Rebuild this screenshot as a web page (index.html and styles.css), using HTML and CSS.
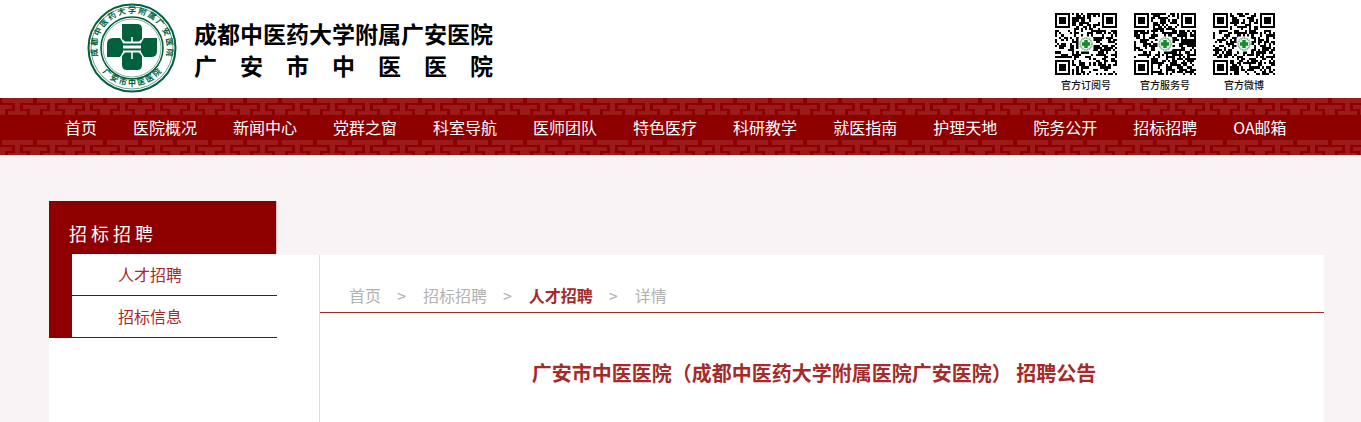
FILE: index.html
```html
<!DOCTYPE html>
<html lang="zh-CN">
<head>
    <meta charset="UTF-8">
    <meta name="viewport" content="width=device-width, initial-scale=1.0">
    <title>广安市中医医院 招聘公告</title>
    <link rel="stylesheet" href="styles.css">
</head>
<body>
    <!-- 页头 -->
    <header class="header">
        <a href="#" class="brand">
            <svg class="seal" viewBox="0 0 90 90" aria-hidden="true">
                <defs>
                    <path id="arcTop" d="M12.500 58 A35 35 0 1 1 77.500 58"/>
                    <path id="arcBottom" d="M12 64 A38.500 38.500 0 0 0 78 64"/>
                </defs>
                <circle cx="45" cy="45" r="43.5" fill="#fff" stroke="#00613c" stroke-width="2"/>
                <circle cx="45" cy="45" r="41" fill="none" stroke="#00613c" stroke-width="0.6"/>
                <circle cx="45" cy="45" r="31" fill="none" stroke="#00613c" stroke-width="1.6"/>
                <circle cx="45" cy="45" r="29" fill="none" stroke="#00613c" stroke-width="0.5"/>
                <text class="seal-text"><textPath href="#arcTop" startOffset="50%" text-anchor="middle">成 都 中 医 药 大 学 附 属 广 安 医 院</textPath></text>
                <text class="seal-text"><textPath href="#arcBottom" startOffset="50%" text-anchor="middle">广 安 市 中 医 医 院</textPath></text>
                <g fill="#00613c">
                    <path d="M35 21 H50 Q55 21 55 26 V36 L52 38.500 H38 L35 36 Z"/>
                    <path d="M35 53 L38 49.500 H52 L55 53 V62 Q55 67 50 67 H40 Q35 67 35 62 Z"/>
                    <path d="M20 41 Q20 35 26 35 H33 L36 40 V49 L33 54 H20 Z"/>
                    <path d="M70 35 V48 Q70 54 64 54 H57 L54 49 V40 L57 35 Z"/>
                    <path d="M36 40.500 H54 V42.500 H36 Z M36 45.500 H54 V47.500 H36 Z"/>
                </g>
                <path d="M45 34 V39 M45 49 V56" fill="none" stroke="#fff" stroke-width="1.500"/>
            </svg>
            <span class="brand-text">
                <span class="brand-line">成都中医药大学附属广安医院</span>
                <span class="brand-line brand-wide">广 安 市 中 医 医 院</span>
            </span>
        </a>
        <div class="codes">
            <div class="code"><svg class="qr" data-seed="17" viewBox="0 0 29 29"></svg><span>官方订阅号</span></div>
            <div class="code"><svg class="qr" data-seed="58" viewBox="0 0 29 29"></svg><span>官方服务号</span></div>
            <div class="code"><svg class="qr" data-seed="93" viewBox="0 0 29 29"></svg><span>官方微博</span></div>
        </div>
    </header>

    <!-- 导航 -->
    <nav class="nav">
        <svg class="fret fret-top" aria-hidden="true">
            <defs>
                <pattern id="fret" width="35" height="17" patternUnits="userSpaceOnUse">
                    <path d="M2 0 H33 V5 H20 V13 H27 V17 H8 V13 H15 V5 H2 Z" fill="#9b1b1b"/>
                    <path d="M0 7 H12 V11 H5 V17 H0 Z M23 7 H35 V17 H30 V11 H23 Z" fill="#9b1b1b"/>
                </pattern>
            </defs>
            <rect width="100%" height="17" fill="url(#fret)"/>
        </svg>
        <ul class="menu">
            <li><a href="#">首页</a></li>
            <li><a href="#">医院概况</a></li>
            <li><a href="#">新闻中心</a></li>
            <li><a href="#">党群之窗</a></li>
            <li><a href="#">科室导航</a></li>
            <li><a href="#">医师团队</a></li>
            <li><a href="#">特色医疗</a></li>
            <li><a href="#">科研教学</a></li>
            <li><a href="#">就医指南</a></li>
            <li><a href="#">护理天地</a></li>
            <li><a href="#">院务公开</a></li>
            <li><a href="#">招标招聘</a></li>
            <li><a href="#">OA邮箱</a></li>
        </ul>
        <svg class="fret fret-bottom" aria-hidden="true">
            <rect width="100%" height="17" fill="url(#fret)"/>
        </svg>
    </nav>

    <!-- 主体 -->
    <main class="main">
        <aside class="side">
            <h2 class="side-title">招 标 招 聘</h2>
            <ul class="side-list">
                <li><a href="#">人才招聘</a></li>
                <li><a href="#">招标信息</a></li>
            </ul>
        </aside>
        <section class="content">
            <div class="crumbs">
                <a href="#">首页</a><i>&gt;</i><a href="#">招标招聘</a><i>&gt;</i><a href="#" class="on">人才招聘</a><i>&gt;</i><span>详情</span>
            </div>
            <h1 class="title">广安市中医医院（成都中医药大学附属医院广安医院） 招聘公告</h1>
        </section>
    </main>

    <script src="qr.js"></script>
</body>
</html>
```
FILE: styles.css
```css
* {
    margin: 0;
    padding: 0;
    box-sizing: border-box;
}

body {
    display: flex;
    flex-direction: column;
    min-height: 100vh;
    font-family: "Noto Sans CJK SC", sans-serif;
    font-size: 16px;
    background: #f8f4f5;
    color: #a52a2a;
}

a {
    color: inherit;
    text-decoration: none;
}

ul {
    list-style: none;
}

/* 页头 */
.header {
    display: flex;
    justify-content: space-between;
    height: 98px;
    padding: 3px 86px 0 87px;
    background: #fff;
}

.brand {
    display: flex;
    gap: 17px;
    color: #000;
}

.seal {
    width: 90px;
    height: 90px;
}

.seal-text {
    font-size: 8px;
    font-weight: 700;
    fill: #00613c;
}

.brand-text {
    padding-top: 14px;
    font-size: 23px;
    font-weight: 700;
    line-height: 32px;
}

.brand-line {
    display: block;
}

.brand-wide {
    text-align-last: justify;
}

.codes {
    display: flex;
    gap: 17px;
    padding-top: 10px;
}

.code {
    display: flex;
    flex-direction: column;
    align-items: center;
    width: 62px;
    color: #111;
    font-size: 10px;
    font-weight: 500;
    line-height: 20px;
}

.qr {
    width: 62px;
    height: 62px;
}

/* 导航 */
.nav {
    background: #8e0000;
}

.fret {
    display: block;
    width: 100%;
    height: 17px;
}

.fret-bottom {
    height: 15px;
}

.menu {
    display: flex;
    padding-left: 47px;
    color: #fff;
    line-height: 25px;
}

.menu a {
    display: block;
    padding: 0 18px;
    white-space: nowrap;
}

/* 主体 */
.main {
    display: flex;
    flex: 1;
    margin: 100px 37px 0 49px;
    background: #fff;
}

.side {
    flex: 0 0 270px;
    margin-top: -54px;
}

.side-title {
    width: 228px;
    height: 53px;
    padding: 12px 20px 0;
    background: #8e0000;
    border-right: 1px solid #e5c3c5;
    color: #fff;
    font-size: 18px;
    font-weight: 400;
    line-height: 40px;
}

.side-list {
    width: 228px;
    border-left: 23px solid #8e0000;
}

.side-list a {
    display: block;
    height: 42px;
    padding-left: 46px;
    border-bottom: 1px solid #8e0000;
    line-height: 41px;
}

.content {
    flex: 1;
    border-left: 1px solid #ddd;
}

.crumbs {
    display: flex;
    height: 58px;
    padding: 29px 0 0 29px;
    border-bottom: 1px solid #a52a2a;
    color: #b2b2b2;
    line-height: 23px;
}

.crumbs i {
    padding: 0 17px 0 16px;
    font-style: normal;
}

.crumbs .on {
    color: #a52a2a;
    font-weight: 700;
}

.title {
    padding: 45px 16px 0 0;
    font-size: 20px;
    line-height: 30px;
    text-align: center;
}
```
FILE: qr.js
```js
// 页头二维码
function isFinder(x, y) {
    return (x < 8 && y < 8) || (x > 20 && y < 8) || (x < 8 && y > 20);
}

function finder(x, y) {
    return `M${x} ${y}h7v7h-7zM${x + 1} ${y + 1}v5h5v-5zM${x + 2} ${y + 2}h3v3h-3z`;
}

document.querySelectorAll('.qr').forEach(function(svg) {
    let seed = Number(svg.dataset.seed);
    let d = finder(0, 0) + finder(22, 0) + finder(0, 22);
    for (let y = 0; y < 29; y++) {
        for (let x = 0; x < 29; x++) {
            seed = (seed * 16807) % 2147483647;
            if (!isFinder(x, y) && seed / 2147483647 < 0.55) {
                d += `M${x} ${y}h1v1h-1z`;
            }
        }
    }
    svg.innerHTML = `
        <path d="${d}" fill="#000" shape-rendering="crispEdges"/>
        <rect x="11" y="11" width="7" height="7" rx="1" fill="#fff"/>
        <circle cx="14.5" cy="14.5" r="2.8" fill="#e4f0e4" stroke="#5fa970" stroke-width="0.7" stroke-dasharray="0.5 0.3"/>
        <path d="M13.700 12.600h1.600v1.100h1.100v1.600h-1.100v1.100h-1.600v-1.100h-1.100v-1.600h1.100z" fill="#178a2c"/>`;
});
```
